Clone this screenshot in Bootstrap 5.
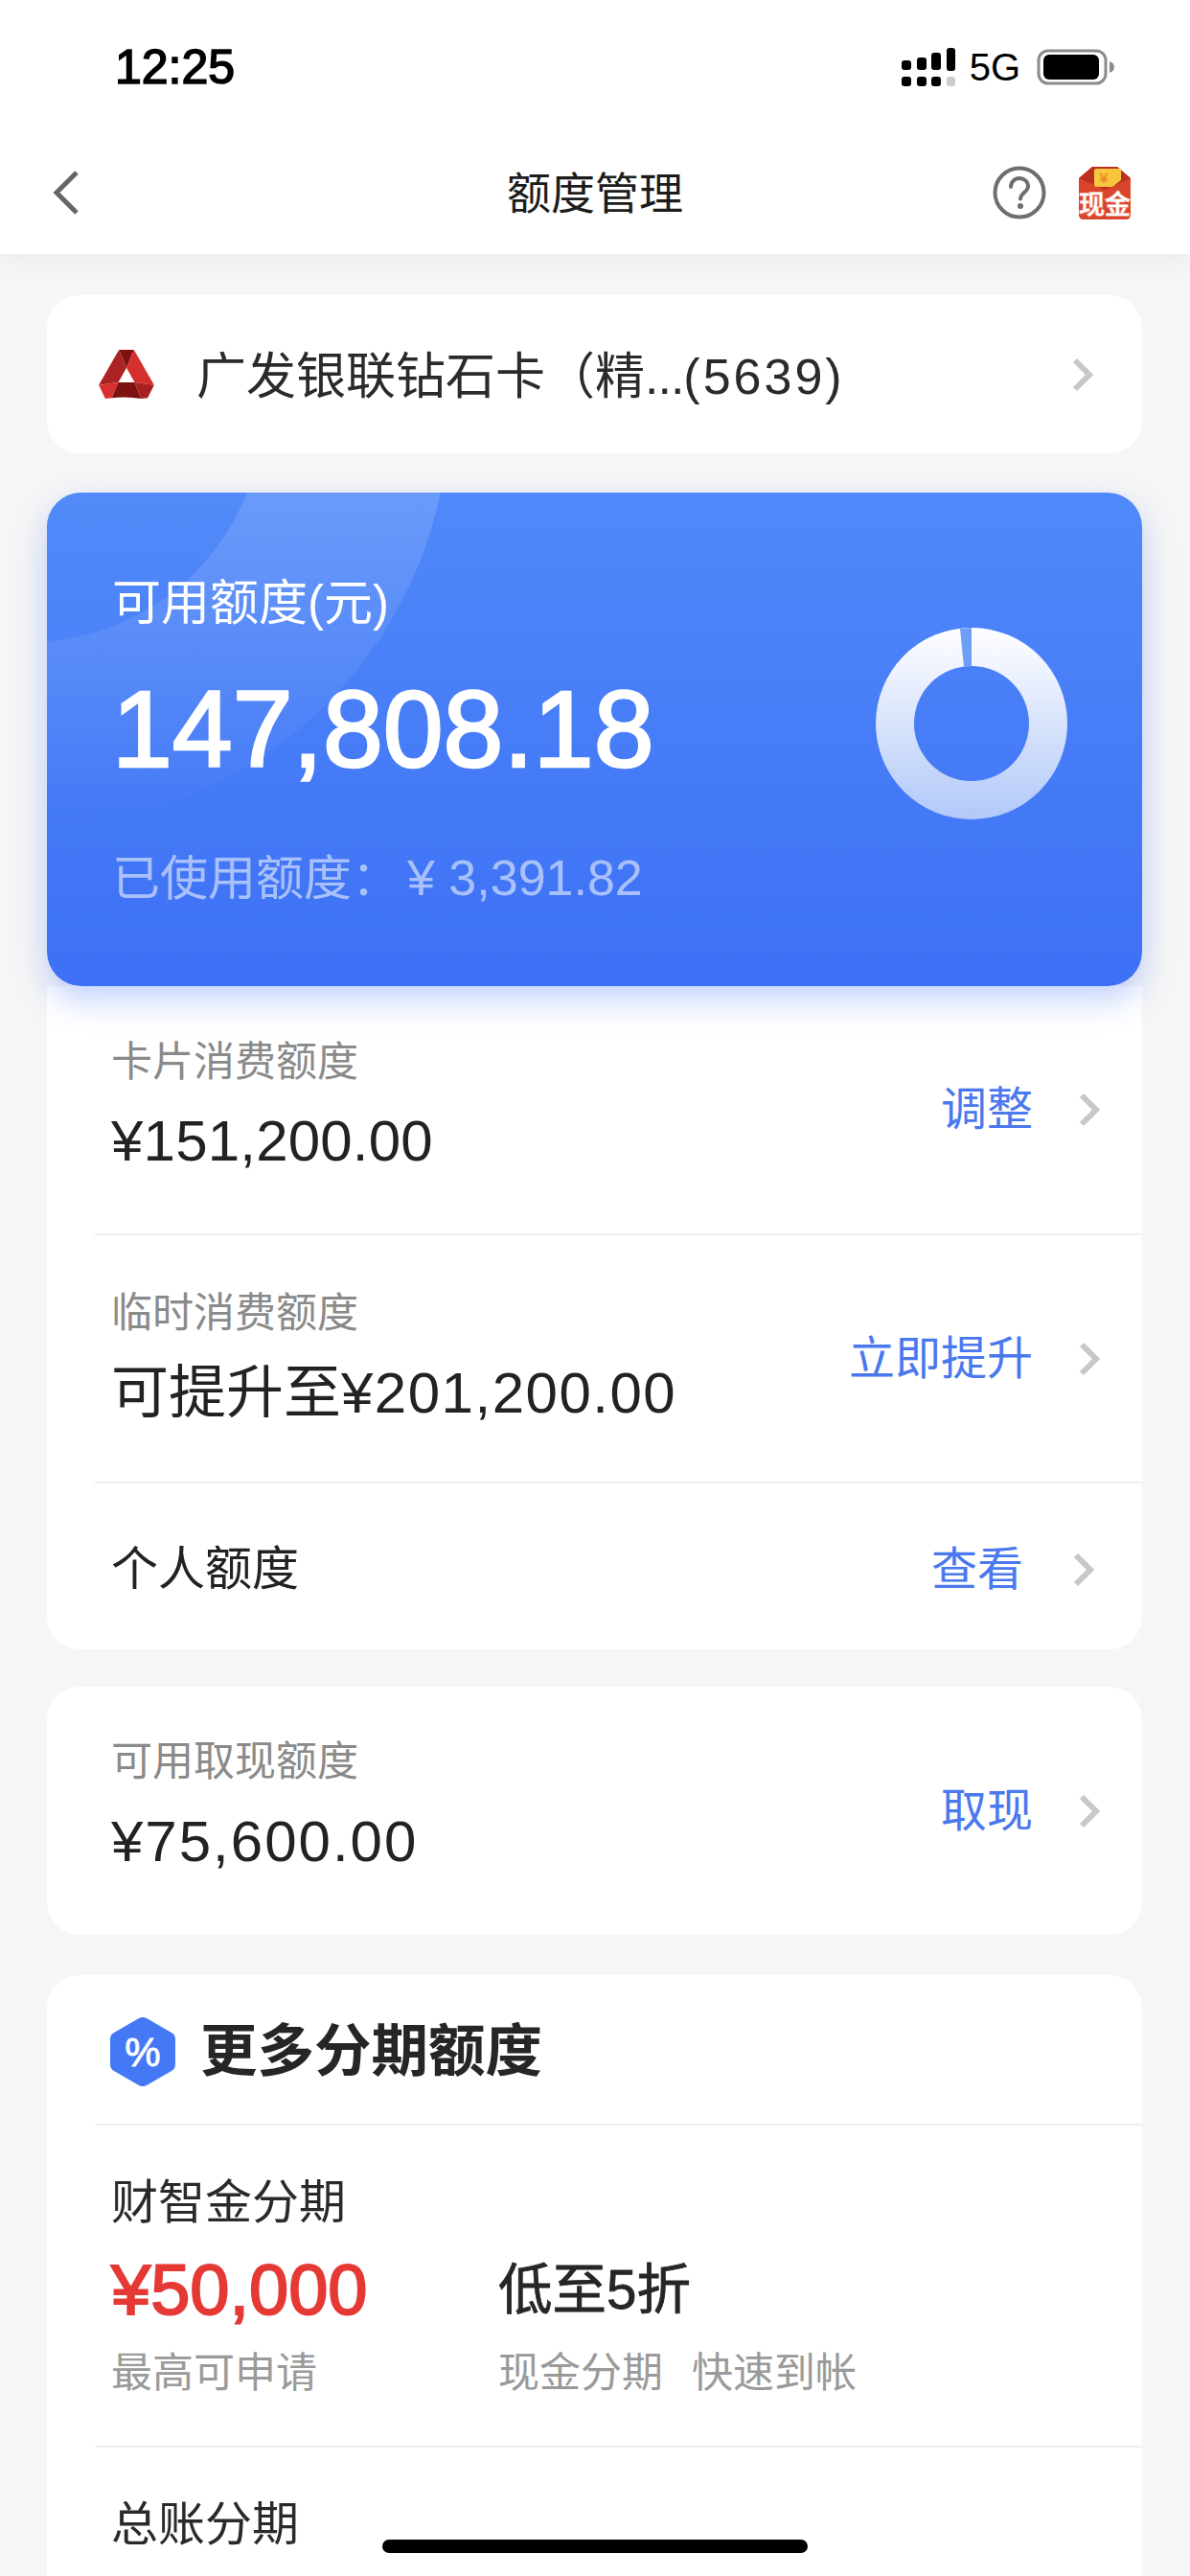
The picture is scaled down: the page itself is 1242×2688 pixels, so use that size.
<!DOCTYPE html>
<html lang="zh-CN">
<head>
  <meta charset="UTF-8">
  <meta name="viewport" content="width=device-width, initial-scale=1.0">
  <title>额度管理</title>
  <link href="https://cdn.jsdelivr.net/npm/bootstrap@5.3.0/dist/css/bootstrap.min.css" rel="stylesheet">
  <style>
    html, body { height: 2688px; overflow: hidden; }
    body {
      background: #f6f6f6;
      color: #222;
      font-family: "Liberation Sans", "Noto Sans CJK SC", sans-serif;
      position: relative;
    }
    .top-head { background: #fff; height: 265px; box-shadow: 0 6px 24px rgba(0,0,0,.05); position: relative; }
    .status-line { height: 140px; padding: 0 79px 0 120px; }
    .clock { font-size: 50px; color: #000; line-height: 1; -webkit-text-stroke: 1.6px #000; }
    .net-5g { font-size: 40px; color: #000; line-height: 1; margin: 0 17px 0 14px; }
    .nav-line { height: 125px; padding: 0 60px 4px 54px; position: relative; }
    .nav-title { font-size: 46px; line-height: 1; position: absolute; left: 0; right: 0; top: 39px; text-align: center; color: #1c1c1c; }
    .page-body { padding: 43px 50px 0 49px; }
    .white-box { background: #fff; border-radius: 34px; border: 0; }
    .bank-box { height: 165px; padding: 0 51px 0 54px; margin-bottom: 41px; }
    .bank-name { font-size: 52px; line-height: 1; margin: 4px 0 0 44px; color: #2a2a2a; white-space: nowrap; }
    .bank-dots { letter-spacing: -1px; }
    .bank-tail { letter-spacing: 3px; }
    .quota-box {
      height: 515px;
      border-radius: 36px;
      background: linear-gradient(180deg, #5089f9 0%, #3d70f5 100%);
      box-shadow: 0 14px 34px rgba(62,112,245,.32);
      position: relative;
      color: #fff;
      padding: 87px 0 0 68px;
      z-index: 2;
    }
    .quota-deco { position: absolute; inset: 0; border-radius: 36px; overflow: hidden; }
    .quota-ring-a, .quota-ring-b { position: absolute; border-radius: 50%; }
    .quota-ring-b { width: 880px; height: 880px; left: -460px; top: -530px; background: linear-gradient(180deg, rgba(255,255,255,.17) 55%, rgba(255,255,255,0) 100%); }
    .quota-ring-a { width: 492px; height: 492px; left: -266px; top: -336px; background: linear-gradient(180deg, rgba(80,137,249,.92) 68%, rgba(74,130,248,.92) 100%); }
    .quota-inner { position: relative; }
    .quota-label { font-size: 51px; line-height: 1.15; }
    .quota-amount { font-size: 113px; line-height: 1; margin-top: 45px; -webkit-text-stroke: 2.6px #fff; }
    .quota-used { font-size: 50px; line-height: 1; margin-top: 72px; color: rgba(255,255,255,.55); white-space: nowrap; }
    .quota-used-num { font-size: 52px; margin-left: 8px; }
    .quota-donut { position: absolute; left: 865px; top: 141px; }
    .rows-box { border-radius: 0 0 34px 34px; height: 692px; margin-bottom: 39px; }
    .quota-row { margin-left: 50px; padding: 0 44px 0 17px; border-bottom: 2px solid #efefef; }
    .quota-row:last-child { border-bottom: 0; }
    .row-a { height: 260px; }
    .row-a .row-text { margin-bottom: 6px; }
    .row-b { height: 259px; }
    .row-c { height: 173px; padding-right: 50px; padding-top: 6px; }
    .cash-box { height: 259px; margin-bottom: 42px; }
    .cash-box .quota-row { height: 259px; border: 0; }
    .cash-box .row-text { margin-bottom: 8px; }
    .row-label { font-size: 43px; line-height: 1.2; color: #8a8a8a; }
    .row-value { font-size: 60px; line-height: 1.2; color: #222; margin-top: 21px; white-space: nowrap; }
    .spaced-s { letter-spacing: .2px; }
    .spaced-m { letter-spacing: 1.5px; }
    .spaced-l { letter-spacing: 2px; }
    .row-plain { font-size: 49px; color: #222; line-height: 1; }
    .row-link { font-size: 48px; color: #4a78ee; line-height: 1; text-decoration: none; margin-right: 48px; }
    .row-c .row-link { margin-right: 52px; }
    .loan-box { height: 900px; border-radius: 34px 34px 0 0; }
    .loan-head { height: 157px; margin-left: 50px; padding: 4px 0 0 16px; border-bottom: 2px solid #efefef; }
    .loan-title { font-size: 59.5px; font-weight: 700; line-height: 1; margin-left: 26px; color: #262626; }
    .loan-row { height: 336px; margin-left: 50px; padding: 51px 0 0 17px; border-bottom: 2px solid #efefef; }
    .loan-name { font-size: 49px; line-height: 1.2; color: #2a2a2a; }
    .loan-nums { margin-top: 25px; }
    .loan-money { width: 404px; }
    .loan-big { font-size: 74px; color: #e53935; line-height: 1; -webkit-text-stroke: 2px #e53935; }
    .loan-rate { font-size: 56.5px; line-height: 74px; color: #262626; -webkit-text-stroke: .8px #262626; }
    .loan-note { font-size: 43px; color: #9a9a9a; line-height: 1; margin-top: 28px; white-space: nowrap; }
    .loan-note span + span { margin-left: 30px; }
    .home-bar { position: absolute; left: 399px; top: 2650px; width: 444px; height: 14px; background: #000; border-radius: 7px; z-index: 5; }
  </style>
</head>
<body>
  <header class="top-head">
    <div class="status-line d-flex align-items-center justify-content-between">
      <div class="clock">12:25</div>
      <div class="d-flex align-items-center">
        <svg width="58" height="42" viewBox="0 0 58 42">
          <rect x="1" y="14" width="10" height="10" rx="3" fill="#000"/><rect x="17" y="11" width="10" height="13" rx="3" fill="#000"/><rect x="32" y="6" width="10" height="18" rx="3" fill="#000"/><rect x="48" y="1" width="9" height="24" rx="3" fill="#000"/>
          <rect x="1" y="31" width="10" height="10" rx="3" fill="#000"/><rect x="17" y="31" width="10" height="10" rx="3" fill="#000"/><rect x="32" y="31" width="10" height="10" rx="3" fill="#000"/><rect x="48" y="31" width="9" height="10" rx="3" fill="#ccc"/>
        </svg>
        <span class="net-5g">5G</span>
        <svg width="81" height="38" viewBox="0 0 81 38">
          <rect x="2" y="2" width="70" height="34" rx="10" fill="none" stroke="#8c8c8c" stroke-width="3"/>
          <rect x="7" y="6" width="58" height="26" rx="6" fill="#000"/>
          <path d="M76 13c3 1 5 3 5 6s-2 5-5 6z" fill="#8c8c8c"/>
        </svg>
      </div>
    </div>
    <div class="nav-line d-flex align-items-center justify-content-between">
      <svg width="30" height="46" viewBox="0 0 30 46"><path d="M26 2 5 23l21 21" fill="none" stroke="#666" stroke-width="5"/></svg>
      <div class="nav-title">额度管理</div>
      <div class="d-flex align-items-center" style="gap:32px">
        <svg width="56" height="56" viewBox="0 0 56 56">
          <circle cx="28" cy="28" r="25.5" fill="none" stroke="#6e6e6e" stroke-width="4"/>
          <path d="M19 22c0-5 4-9 9-9s9 3.500 9 8.500c0 6-8 6.500-8 13" fill="none" stroke="#6e6e6e" stroke-width="4" stroke-linecap="round"/>
          <circle cx="29" cy="42" r="3" fill="#6e6e6e"/>
        </svg>
        <svg width="58" height="58" viewBox="0 0 58 58">
          <path d="M2 14 16 2h26l14 12v38q0 5-5 5H7q-5 0-5-5z" fill="#d8452c"/>
          <path d="M2 14 16 2h26l14 12-27 12z" fill="#bd2f1f"/>
          <path d="M18 6q0-2 2-2h24q2 0 2 2v10l-9 7H20q-2 0-2-2z" fill="#f6c63c"/>
          <text x="28" y="19" font-size="15" fill="#ee8c2c" stroke="#ee8c2c" stroke-width=".6" text-anchor="middle" font-family="Liberation Sans, sans-serif">¥</text>
          <text x="29" y="51" font-size="27" font-weight="500" fill="#fff" stroke="#f3a08e" stroke-width="1.500" paint-order="stroke" text-anchor="middle" font-family="Noto Sans CJK SC, sans-serif">现金</text>
        </svg>
      </div>
    </div>
  </header>

  <main class="page-body">
    <div class="white-box bank-box d-flex align-items-center">
      <svg width="58" height="51" viewBox="0 0 170 150">
        <polygon points="62,0 108,0 85,55" fill="#7d1210"/>
        <polygon points="62,0 85,55 60,100 0,108" fill="#ad2222"/>
        <polygon points="108,0 85,55 110,100 170,108" fill="#d42f2f"/>
        <polygon points="0,108 60,100 40,148 20,150" fill="#d83030"/>
        <path d="M60 100h50l20 50q-45-8-90-2z" fill="#7d1210"/>
        <polygon points="110,100 170,108 150,148 130,150" fill="#a92020"/>
      </svg>
      <div class="bank-name">广发银联钻石卡（精<span class="bank-dots">...</span><span class="bank-tail">(5639)</span></div>
      <svg class="ms-auto" width="22" height="36" viewBox="0 0 22 36"><path d="M3 3l15 15L3 33" fill="none" stroke="#c8c8cc" stroke-width="6"/></svg>
    </div>

    <section class="quota-box">
      <div class="quota-deco">
        <div class="quota-ring-b"></div>
        <div class="quota-ring-a"></div>
      </div>
      <div class="quota-inner">
        <div class="quota-label">可用额度(元)</div>
        <div class="quota-amount">147,808.18</div>
        <div class="quota-used">已使用额度：<span class="quota-used-num">¥ 3,391.82</span></div>
      </div>
      <svg class="quota-donut" width="200" height="200" viewBox="0 0 200 200">
        <defs>
          <linearGradient id="donutFill" x1="0" y1="0" x2="0" y2="1">
            <stop offset="0" stop-color="#fff"/>
            <stop offset="1" stop-color="#b1c8f8"/>
          </linearGradient>
        </defs>
        <path fill-rule="evenodd" fill="url(#donutFill)" d="M100 0a100 100 0 1 0 0 200a100 100 0 1 0 0-200zM100 40a60 60 0 1 1 0 120a60 60 0 1 1 0-120z"/>
        <path d="M88 1 100 0 100 40 92 41z" fill="#6d9ef8"/>
      </svg>
    </section>

    <section class="white-box rows-box">
      <div class="quota-row row-a d-flex align-items-center justify-content-between">
        <div class="row-text">
          <div class="row-label">卡片消费额度</div>
          <div class="row-value spaced-s">¥151,200.00</div>
        </div>
        <div class="d-flex align-items-center">
          <a class="row-link">调整</a>
          <svg width="22" height="36" viewBox="0 0 22 36"><path d="M3 3l15 15L3 33" fill="none" stroke="#c8c8cc" stroke-width="6"/></svg>
        </div>
      </div>
      <div class="quota-row row-b d-flex align-items-center justify-content-between">
        <div class="row-text">
          <div class="row-label">临时消费额度</div>
          <div class="row-value">可提升至<span class="spaced-m">¥201,200.00</span></div>
        </div>
        <div class="d-flex align-items-center">
          <a class="row-link">立即提升</a>
          <svg width="22" height="36" viewBox="0 0 22 36"><path d="M3 3l15 15L3 33" fill="none" stroke="#c8c8cc" stroke-width="6"/></svg>
        </div>
      </div>
      <div class="quota-row row-c d-flex align-items-center justify-content-between">
        <div class="row-plain">个人额度</div>
        <div class="d-flex align-items-center">
          <a class="row-link">查看</a>
          <svg width="22" height="36" viewBox="0 0 22 36"><path d="M3 3l15 15L3 33" fill="none" stroke="#c8c8cc" stroke-width="6"/></svg>
        </div>
      </div>
    </section>

    <section class="white-box cash-box">
      <div class="quota-row d-flex align-items-center justify-content-between">
        <div class="row-text">
          <div class="row-label">可用取现额度</div>
          <div class="row-value spaced-l">¥75,600.00</div>
        </div>
        <div class="d-flex align-items-center">
          <a class="row-link">取现</a>
          <svg width="22" height="36" viewBox="0 0 22 36"><path d="M3 3l15 15L3 33" fill="none" stroke="#c8c8cc" stroke-width="6"/></svg>
        </div>
      </div>
    </section>

    <section class="white-box loan-box">
      <div class="loan-head d-flex align-items-center">
        <svg width="68" height="74" viewBox="0 0 68 74">
          <path d="M30 2 4 17q-4 2-4 7v26q0 5 4 7l26 15q4 2 8 0l26-15q4-2 4-7V24q0-5-4-7L38 2q-4-2-8 0z" fill="#4478f5"/>
          <text x="34" y="52" font-size="42" fill="#fff" stroke="#fff" stroke-width=".8" text-anchor="middle" font-family="Liberation Sans, sans-serif">%</text>
        </svg>
        <div class="loan-title">更多分期额度</div>
      </div>
      <div class="loan-row">
        <div class="loan-name">财智金分期</div>
        <div class="loan-nums d-flex">
          <div class="loan-money">
            <div class="loan-big">¥50,000</div>
            <div class="loan-note">最高可申请</div>
          </div>
          <div>
            <div class="loan-rate">低至5折</div>
            <div class="loan-note"><span>现金分期</span><span>快速到帐</span></div>
          </div>
        </div>
      </div>
      <div class="loan-row">
        <div class="loan-name">总账分期</div>
      </div>
    </section>
  </main>

  <div class="home-bar"></div>
  <script src="https://cdn.jsdelivr.net/npm/bootstrap@5.3.0/dist/js/bootstrap.bundle.min.js"></script>
</body>
</html>
